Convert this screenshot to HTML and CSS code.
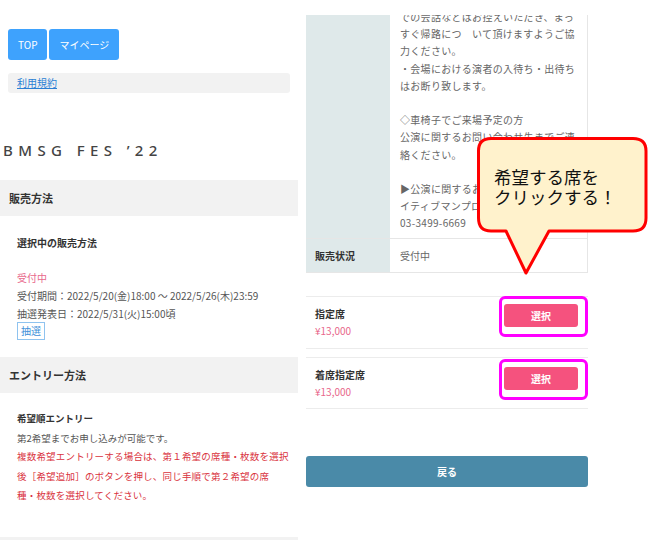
FILE: index.html
```html
<!DOCTYPE html>
<html lang="ja">
<head>
<meta charset="UTF-8">
<title>BMSG FES '22</title>
<link rel="stylesheet" href="styles.css">
</head>
<body>
<div class="page">
  <div class="left">
    <div class="nav">
      <a class="nav-btn" href="#">TOP</a>
      <a class="nav-btn" href="#">マイページ</a>
    </div>
    <div class="terms"><a href="#">利用規約</a></div>
    <h1 class="event-title">BMSG FES ’22</h1>

    <section class="block">
      <h2 class="block-head">販売方法</h2>
      <div class="block-body">
        <h3 class="sub">選択中の販売方法</h3>
        <p class="status">受付中</p>
        <p>受付期間：2022/5/20(金)18:00 ～ 2022/5/26(木)23:59</p>
        <p>抽選発表日：2022/5/31(火)15:00頃</p>
        <span class="tag">抽選</span>
      </div>
    </section>

    <section class="block">
      <h2 class="block-head">エントリー方法</h2>
      <div class="block-body">
        <h3 class="sub">希望順エントリー</h3>
        <p class="note">第2希望までお申し込みが可能です。</p>
        <p class="warn">複数希望エントリーする場合は、第１希望の席種・枚数を選択<br>後［希望追加］のボタンを押し、同じ手順で第２希望の席<br>種・枚数を選択してください。</p>
      </div>
    </section>
    <div class="block-head next"></div>
  </div>

  <div class="right">
    <div class="info">
      <div class="info-row">
        <div class="info-label"></div>
        <div class="info-text">
          <div class="clip">
            での会話などはお控えいただき、まっ<br>
            すぐ帰路につ　いて頂けますようご協<br>
            力ください。<br>
            ・会場における演者の入待ち・出待ち<br>
            はお断り致します。<br>
            <br>
            ◇車椅子でご来場予定の方<br>
            公演に関するお問い合わせ先までご連<br>
            絡ください。<br>
            <br>
            ▶公演に関するお問い合わせ：クリエ<br>
            イティブマンプロダクション<br>
            03-3499-6669
          </div>
        </div>
      </div>
      <div class="info-row short">
        <div class="info-label">販売状況</div>
        <div class="info-text">受付中</div>
      </div>
    </div>

    <ul class="seats">
      <li class="seat">
        <div class="seat-info">
          <div class="seat-name">指定席</div>
          <div class="seat-price">¥13,000</div>
        </div>
        <div class="pick"><button class="pick-btn">選択</button></div>
      </li>
      <li class="seat">
        <div class="seat-info">
          <div class="seat-name">着席指定席</div>
          <div class="seat-price">¥13,000</div>
        </div>
        <div class="pick second"><button class="pick-btn">選択</button></div>
      </li>
    </ul>

    <button class="back">戻る</button>
  </div>

  <div class="callout">
    <svg class="callout-shape" width="172" height="140" viewBox="0 0 172 140">
      <path d="M14 1.5 H156 Q169 1.5 169 14 V81 Q169 94 156 94 H72 L49 136 L29 94 H14 Q1.5 94 1.5 81 V14 Q1.5 1.5 14 1.5 Z" fill="#fff2cc" stroke="#ff0000" stroke-width="3" stroke-linejoin="round"/>
    </svg>
    <div class="callout-text">希望する席を<br>クリックする！</div>
  </div>
</div>
</body>
</html>
```

FILE: styles.css
```css
body {
  margin: 0;
  background: #fff;
  font-family: "Noto Sans CJK JP", "Noto Sans", sans-serif;
  color: #333;
}

.page {
  position: relative;
  display: flex;
  width: 662px;
  height: 540px;
  overflow: hidden;
}

/* left screen */
.left {
  width: 298px;
}

.nav {
  display: flex;
  gap: 2px;
  padding: 29px 8px 0;
}

.nav-btn {
  display: flex;
  align-items: center;
  height: 31px;
  padding: 0 10px;
  background-color: #3ea2fd;
  color: #fff;
  font-size: 10px;
  text-decoration: none;
  border-radius: 3px;
}

.terms {
  margin: 13px 8px 0;
  height: 20px;
  padding-left: 9px;
  background-color: #f2f2f2;
  border-radius: 3px;
  font-size: 10px;
  line-height: 20px;
}

.terms a {
  color: #2a7fd4;
}

.event-title {
  margin: 47px 0 0;
  padding-left: 3px;
  font-family: "Noto Sans", sans-serif;
  font-weight: 500;
  font-size: 15px;
  line-height: 20px;
  letter-spacing: 5.4px;
  color: #444;
}

.block-head {
  margin: 0;
  height: 36px;
  padding-left: 9px;
  background-color: #f2f2f2;
  font-size: 11px;
  font-weight: bold;
  line-height: 36px;
  color: #333;
}

.block:first-of-type .block-head {
  margin-top: 20px;
}

.block-head.next {
  margin-top: 31px;
}

.block-body {
  padding: 19px 17px 17px;
  font-size: 10px;
  color: #555;
}

.block-body p {
  margin: 0;
  line-height: 18px;
}

.sub {
  margin: 0;
  font-size: 10px;
  line-height: 16px;
  font-weight: bold;
  color: #333;
}

.status {
  margin-top: 18px !important;
  color: #e8688c;
}

.tag {
  display: inline-block;
  margin-top: -1px;
  height: 16px;
  padding: 0 3px;
  border: 1px solid #8fc3ef;
  color: #3d8fd8;
  line-height: 16px;
}

.block + .block .block-body {
  padding-top: 16px;
  padding-bottom: 0;
}

.block + .block .sub {
  line-height: 18px;
  font-size: 9.5px;
}

.note {
  margin-top: 2px !important;
  font-size: 9.5px;
}

.warn {
  color: #d9323d;
  font-size: 9.5px;
  letter-spacing: 0.2px;
  white-space: nowrap;
  line-height: 19.5px !important;
}

/* right screen */
.right {
  width: 282px;
  margin-left: 8px;
  padding-top: 15px;
}

.info {
  border-right: 1px solid #e6e6e6;
  border-bottom: 1px solid #e6e6e6;
}

.info-row {
  display: grid;
  grid-template-columns: 84px 1fr;
}

.info-row.short {
  height: 33px;
  border-top: 1px solid #e6e6e6;
}

.info-label {
  display: flex;
  align-items: center;
  padding-left: 9px;
  background-color: #dfe9ea;
  font-size: 10px;
  font-weight: bold;
  color: #333;
}

.info-text {
  display: flex;
  align-items: center;
  padding-left: 10px;
  overflow: hidden;
  font-size: 10px;
  color: #666;
}

.info-row:first-child .info-text {
  display: block;
  padding-bottom: 6px;
}

.clip {
  margin-top: -7px;
  line-height: 17.2px;
  letter-spacing: 0.3px;
  white-space: nowrap;
}

.seats {
  list-style: none;
  margin: 23px 0 0;
  padding: 0;
}

.seat {
  display: flex;
  justify-content: space-between;
  align-items: flex-start;
  height: 51px;
  border-top: 1px solid #ececec;
  border-bottom: 1px solid #ececec;
}

.seat + .seat {
  margin-top: 8px;
  height: 50px;
}

.seat-info {
  padding: 8px 9px;
  font-size: 10px;
  line-height: 17px;
}

.seat-name {
  font-weight: bold;
  color: #333;
}

.seat-price {
  color: #e8688c;
}

.pick {
  margin-top: -1px;
  padding: 5px 7px 7px 2px;
  border: 3px solid #ff00ff;
  border-radius: 6px;
}

.pick.second {
  margin-top: 1px;
}

.pick-btn {
  display: block;
  width: 74px;
  height: 23px;
  border: none;
  border-radius: 3px;
  background-color: #f5527e;
  color: #fff;
  font-family: inherit;
  font-size: 10px;
  font-weight: bold;
}

.back {
  display: block;
  width: 100%;
  height: 31px;
  margin-top: 47px;
  border: none;
  border-radius: 3px;
  background-color: #4a8aa8;
  color: #fff;
  font-family: inherit;
  font-size: 10px;
  font-weight: bold;
}

/* annotation bubble */
.callout {
  position: absolute;
  left: 477px;
  top: 137px;
  width: 172px;
  height: 140px;
}

.callout-shape {
  position: absolute;
  left: 0;
  top: 0;
}

.callout-text {
  position: relative;
  padding: 30px 0 0 17px;
  font-size: 17.5px;
  line-height: 20px;
  color: #111;
}
```
